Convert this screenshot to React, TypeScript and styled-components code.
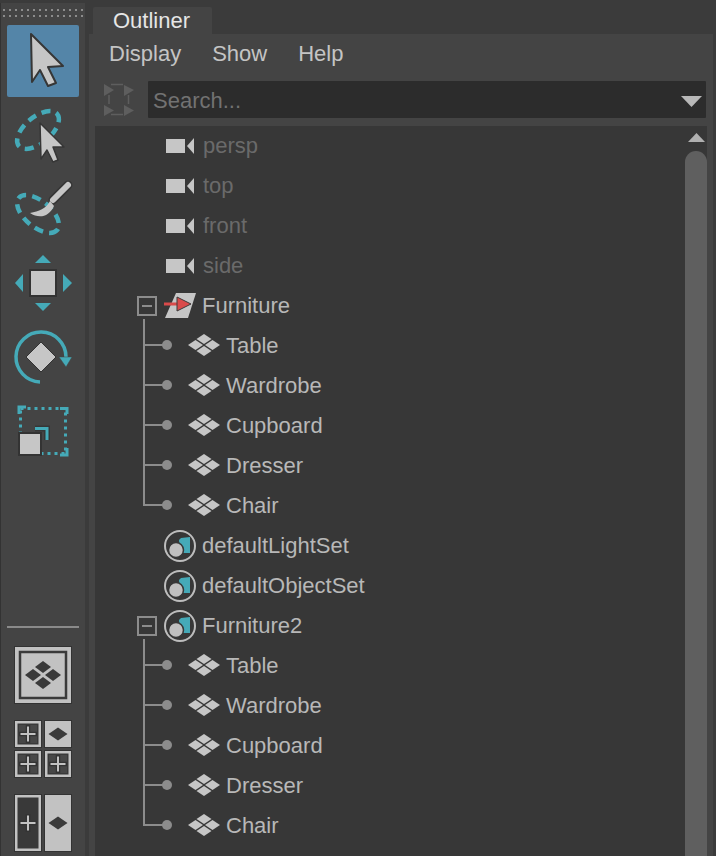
import React from 'react';
import styled, { createGlobalStyle } from 'styled-components';

const TEAL = '#45aab8';
const LIGHT = '#c6c6c6';
const DARK = '#373737';

const GlobalStyle = createGlobalStyle`
  html, body {
    margin: 0;
    padding: 0;
    background: #3b3b3b;
  }
`;

const Page = styled.div`
  display: flex;
  width: 716px;
  height: 856px;
  overflow: hidden;
  background: #3b3b3b;
  font-family: "Liberation Sans", Arial, sans-serif;
  font-size: 22px;
`;

const Toolbar = styled.aside`
  display: flex;
  flex-direction: column;
  flex: none;
  box-sizing: border-box;
  width: 85px;
  height: 853px;
  margin-top: 3px;
  padding-left: 6px;
  background: #444444;
  border-left: 1px solid #333333;
`;

const Grip = styled.div`
  flex: none;
  width: 81px;
  height: 12px;
  margin: 6px 0 4px -5px;
  background-image: radial-gradient(circle at 2px 1px, #8c8c8c 1px, transparent 1.3px);
  background-size: 6px 6px;
`;

const ToolStack = styled.div`
  display: flex;
  flex-direction: column;
  flex: none;
  gap: 2px;
`;

const ToolButton = styled.button<{ $active?: boolean }>`
  display: block;
  flex: none;
  width: 72px;
  height: 72px;
  padding: 0;
  border: none;
  border-radius: 2px;
  background: ${props => (props.$active ? '#5485a8' : 'transparent')};
`;

const Divider = styled.div`
  flex: none;
  width: 72px;
  height: 2px;
  margin: 159px 0 11px;
  background: #8a8a8a;
`;

const Main = styled.main`
  display: flex;
  flex-direction: column;
  flex: 1;
  min-width: 0;
`;

const TabBar = styled.div`
  display: flex;
  flex: none;
  height: 27px;
  padding: 7px 0 0 8px;
`;

const Tab = styled.div`
  box-sizing: border-box;
  width: 119px;
  height: 27px;
  padding-left: 20px;
  border-radius: 2px 2px 0 0;
  background: #444444;
  color: #e6e6e6;
  line-height: 28px;
`;

const Panel = styled.section`
  display: flex;
  flex-direction: column;
  flex: 1;
  min-height: 0;
  width: 624px;
  margin-left: 4px;
  background: #444444;
`;

const MenuBar = styled.nav`
  display: flex;
  flex: none;
  gap: 31px;
  height: 47px;
  padding-left: 20px;
  color: #c4c4c4;
  line-height: 40px;
`;

const SearchRow = styled.div`
  display: flex;
  flex: none;
  gap: 14px;
  align-items: center;
  height: 37px;
  margin-bottom: 8px;
  padding: 0 7px 0 15px;
`;

const SearchBox = styled.div`
  display: flex;
  flex: 1;
  box-sizing: border-box;
  align-items: center;
  justify-content: space-between;
  height: 37px;
  padding: 2px 4px 0 5px;
  border-radius: 1px;
  background: #2c2c2c;
  color: #727272;
`;

const DropArrow = styled.svg`
  flex: none;
  margin-top: 2px;
`;

const TreeArea = styled.div`
  display: flex;
  flex: 1;
  min-height: 0;
  margin: 0 6px;
  background: ${DARK};
`;

const TreeList = styled.ul`
  flex: 1;
  margin: 0;
  padding: 0 0 0 42px;
  list-style: none;
`;

const Row = styled.li<{ $dim?: boolean }>`
  display: flex;
  align-items: center;
  height: 40px;
  color: ${props => (props.$dim ? '#6a6a6a' : '#b8b8b8')};
`;

const Gutter = styled.span`
  flex: none;
  width: 27px;
  height: 40px;
`;

const Label = styled.span<{ $gap: number }>`
  margin-left: ${props => props.$gap}px;
`;

const ScrollTrack = styled.div`
  display: flex;
  flex-direction: column;
  align-items: center;
  flex: none;
  width: 22px;
  padding-top: 7px;
`;

const ScrollThumb = styled.div`
  flex: 1;
  width: 22px;
  margin-top: 9px;
  border-radius: 11px 11px 0 0;
  background: #5f5f5f;
`;

const SelectArrow = ({ points, edge = 2 }: { points: string; edge?: number }) => (
  <polygon points={points} fill={LIGHT} stroke="#363636" strokeWidth={edge} strokeLinejoin="round" />
);

const ToolIcon = ({ children }: { children: React.ReactNode }) => (
  <svg width={72} height={72} viewBox="0 0 72 72">
    {children}
  </svg>
);

const Diamond = ({ x, y, w, h, fill }: { x: number; y: number; w: number; h: number; fill: string }) => (
  <polygon points={`${x},${y - h} ${x + w},${y} ${x},${y + h} ${x - w},${y}`} fill={fill} />
);

const PlusCell = ({ x, y, w = 26, h = 26 }: { x: number; y: number; w?: number; h?: number }) => {
  const cx = x + w / 2;
  const cy = y + h / 2;
  return (
    <g>
      <rect x={x - 1} y={y - 1} width={w + 2} height={h + 2} fill="#333333" />
      <rect x={x + 1.25} y={y + 1.25} width={w - 2.5} height={h - 2.5} fill="#393939" stroke="#c2c2c2" strokeWidth={2.5} />
      {h === 26 &&
        [
          [x + 4, y + 4],
          [x + 15, y + 4],
          [x + 4, y + 15],
          [x + 15, y + 15],
        ].map(([px, py]) => <rect key={`${px}-${py}`} x={px} y={py} width={7} height={7} fill="#474747" />)}
      <path d={`M${cx - 9} ${cy}h18M${cx} ${cy - 9}v18`} stroke="#333333" strokeWidth={4.5} />
      <path d={`M${cx - 7.5} ${cy}h15M${cx} ${cy - 7.5}v15`} stroke="#c2c2c2" strokeWidth={2} />
    </g>
  );
};

const FilledCell = ({ x, y, w = 26, h = 26 }: { x: number; y: number; w?: number; h?: number }) => (
  <g>
    <rect x={x - 1} y={y - 1} width={w + 2} height={h + 2} fill="#333333" />
    <rect x={x} y={y} width={w} height={h} fill="#c2c2c2" />
    <Diamond x={x + w / 2} y={y + h / 2} w={9.5} h={6.5} fill="#3a3a3a" />
  </g>
);

const CameraIcon = () => (
  <svg width={33} height={20} viewBox="0 0 33 20">
    <rect x={2} y={3} width={19} height={14} fill={LIGHT} />
    <polygon points="23,10 30,2 30,18" fill={LIGHT} />
  </svg>
);

const GroupIcon = () => (
  <svg width={34} height={24} viewBox="0 0 34 24">
    <Diamond x={17} y={5} w={7.5} h={5} fill={LIGHT} />
    <Diamond x={8.5} y={11} w={7.5} h={5} fill={LIGHT} />
    <Diamond x={25.5} y={11} w={7.5} h={5} fill={LIGHT} />
    <Diamond x={17} y={17} w={7.5} h={5} fill={LIGHT} />
  </svg>
);

const SetIcon = () => (
  <svg width={33} height={40} viewBox="0 0 33 40">
    <circle cx={16} cy={20} r={15} fill="none" stroke="#bdbdbd" strokeWidth={2} />
    <polygon points="17,12 26,11 26,27 16,27 15,14" fill={TEAL} />
    <circle cx={12} cy={24} r={7.5} fill="#c0c0c0" stroke={DARK} strokeWidth={1.5} />
  </svg>
);

const RedirectIcon = () => (
  <svg width={33} height={40} viewBox="0 0 33 40">
    <polygon points="1,32 12,7 32,7 24,32" fill={LIGHT} />
    <path d="M0 18h15" stroke="#d94a4a" strokeWidth={3} />
    <polygon points="13,11 27,18 13,25" fill="#d94a4a" stroke="#3a3a3a" strokeWidth={1} strokeLinejoin="round" />
  </svg>
);

const Expander = () => (
  <Gutter>
    <svg width={27} height={40} viewBox="0 0 27 40" style={{ display: 'block' }}>
      <rect x={1} y={11} width={18} height={18} fill="none" stroke="#8c8c8c" strokeWidth={2} />
      <path d="M5 20h10" stroke="#8c8c8c" strokeWidth={2} />
      <path d="M7 33v7" stroke="#8c8c8c" strokeWidth={2} />
    </svg>
  </Gutter>
);

const Connector = ({ last }: { last?: boolean }) => (
  <svg width={50} height={40} viewBox="0 0 50 40" style={{ flex: 'none' }}>
    <path d={`M7 0V${last ? 20 : 40}M6 19H28`} fill="none" stroke="#8c8c8c" strokeWidth={2} />
    <circle cx={30} cy={19} r={5} fill="#8c8c8c" />
  </svg>
);

const CHILDREN = ['Table', 'Wardrobe', 'Cupboard', 'Dresser', 'Chair'];
const CAMERAS = ['persp', 'top', 'front', 'side'];

const ChildRows = ({ prefix }: { prefix: string }) => (
  <>
    {CHILDREN.map((name, i) => (
      <Row key={prefix + name}>
        <Connector last={i === CHILDREN.length - 1} />
        <GroupIcon />
        <Label $gap={5}>{name}</Label>
      </Row>
    ))}
  </>
);

export default function App() {
  return (
    <Page>
      <GlobalStyle />
      <Toolbar>
        <Grip />
        <ToolStack>
          <ToolButton $active>
            <ToolIcon>
              <SelectArrow points="24,9 56,41 41,42 49,58 41,61 33,45 25,57" />
            </ToolIcon>
          </ToolButton>
          <ToolButton>
            <ToolIcon>
              <ellipse
                cx={31}
                cy={31}
                rx={25}
                ry={13}
                transform="rotate(-40 31 31)"
                fill="none"
                stroke={TEAL}
                strokeWidth={4.5}
                strokeDasharray="9 6"
              />
              <SelectArrow points="33,24 57,48 46,48 51,61 46,63 40,51 34,60" edge={1.5} />
            </ToolIcon>
          </ToolButton>
          <ToolButton>
            <ToolIcon>
              <ellipse
                cx={31}
                cy={41}
                rx={25}
                ry={13}
                transform="rotate(40 31 41)"
                fill="none"
                stroke={TEAL}
                strokeWidth={4.5}
                strokeDasharray="9 6"
              />
              <path d="M61 12L46 27" stroke="#363636" strokeWidth={9} strokeLinecap="round" />
              <path d="M61 12L46 27" stroke={LIGHT} strokeWidth={6} strokeLinecap="round" />
              <path d="M43 28C39 36 32 38 23 40C32 46 42 44 47 33Z" fill={LIGHT} />
            </ToolIcon>
          </ToolButton>
          <ToolButton>
            <ToolIcon>
              <rect x={23} y={23} width={26} height={26} fill={LIGHT} stroke="#333333" strokeWidth={2} />
              <polygon points="36,8 44,16 28,16" fill={TEAL} />
              <polygon points="36,64 44,56 28,56" fill={TEAL} />
              <polygon points="8,36 16,27 16,45" fill={TEAL} />
              <polygon points="65,36 56,27 56,45" fill={TEAL} />
            </ToolIcon>
          </ToolButton>
          <ToolButton>
            <ToolIcon>
              <path d="M59 36A25 25 0 1 0 33 61" fill="none" stroke={TEAL} strokeWidth={3.5} />
              <polygon points="52,36 65,36 59,46" fill={TEAL} stroke="#444444" strokeWidth={0.5} />
              <polygon points="34,21 49,36 34,51 19,36" fill={LIGHT} stroke="#333333" strokeWidth={1} />
            </ToolIcon>
          </ToolButton>
          <ToolButton>
            <ToolIcon>
              <rect x={13.5} y={13.5} width={45} height={45} fill="none" stroke={TEAL} strokeWidth={3} strokeDasharray="3 4" />
              <path d="M12 19V12H19M53 13.5H60V19M60 53V60H53" fill="none" stroke={TEAL} strokeWidth={3} />
              <path d="M28 33.5H40V45" fill="none" stroke="#363636" strokeWidth={6} />
              <path d="M28 33.5H40V45" fill="none" stroke={TEAL} strokeWidth={3} />
              <rect x={12} y={38} width={22} height={22} fill={LIGHT} stroke="#333333" strokeWidth={2} />
            </ToolIcon>
          </ToolButton>
        </ToolStack>
        <Divider />
        <ToolStack>
          <ToolButton>
            <ToolIcon>
              <rect x={7} y={7} width={58} height={58} fill="#333333" />
              <rect x={8} y={8} width={56} height={56} fill="#c2c2c2" />
              <rect x={13} y={13} width={46} height={46} fill="none" stroke="#3a3a3a" strokeWidth={2.5} />
              <Diamond x={36} y={28} w={8} h={6} fill="#3a3a3a" />
              <Diamond x={26} y={36} w={8} h={6} fill="#3a3a3a" />
              <Diamond x={46} y={36} w={8} h={6} fill="#3a3a3a" />
              <Diamond x={36} y={44} w={8} h={6} fill="#3a3a3a" />
            </ToolIcon>
          </ToolButton>
          <ToolButton>
            <ToolIcon>
              <PlusCell x={8} y={8} />
              <FilledCell x={38} y={8} />
              <PlusCell x={8} y={38} />
              <PlusCell x={38} y={38} />
            </ToolIcon>
          </ToolButton>
          <ToolButton>
            <ToolIcon>
              <PlusCell x={8} y={8} h={56} />
              <FilledCell x={38} y={8} h={56} />
            </ToolIcon>
          </ToolButton>
        </ToolStack>
      </Toolbar>
      <Main>
        <TabBar>
          <Tab>Outliner</Tab>
        </TabBar>
        <Panel>
          <MenuBar>
            <span>Display</span>
            <span>Show</span>
            <span>Help</span>
          </MenuBar>
          <SearchRow>
            <svg width={30} height={33} viewBox="0 0 30 33">
              <g fill="#5e5e5e">
                <polygon points="0,1 10,7 0,13" />
                <polygon points="20,2 30,7 20,13" />
                <polygon points="0,22 10,27.5 0,33" />
                <polygon points="20,22 30,27.5 20,33" />
              </g>
              <path d="M7 1.5H19M7 31.5H19M5 12V21M24.5 12V21" stroke="#5e5e5e" strokeWidth={1.5} fill="none" />
            </svg>
            <SearchBox>
              <span>Search...</span>
              <DropArrow width={21} height={11} viewBox="0 0 21 11">
                <polygon points="0,0 21,0 10.5,11" fill="#b8b8b8" />
              </DropArrow>
            </SearchBox>
          </SearchRow>
          <TreeArea>
            <TreeList>
              {CAMERAS.map(name => (
                <Row key={name} $dim>
                  <Gutter />
                  <CameraIcon />
                  <Label $gap={6}>{name}</Label>
                </Row>
              ))}
              <Row>
                <Expander />
                <RedirectIcon />
                <Label $gap={5}>Furniture</Label>
              </Row>
              <ChildRows prefix="a" />
              <Row>
                <Gutter />
                <SetIcon />
                <Label $gap={5}>defaultLightSet</Label>
              </Row>
              <Row>
                <Gutter />
                <SetIcon />
                <Label $gap={5}>defaultObjectSet</Label>
              </Row>
              <Row>
                <Expander />
                <SetIcon />
                <Label $gap={5}>Furniture2</Label>
              </Row>
              <ChildRows prefix="b" />
            </TreeList>
            <ScrollTrack>
              <svg width={17} height={9} viewBox="0 0 17 9" style={{ flex: 'none' }}>
                <polygon points="8.5,0 17,9 0,9" fill="#b0b0b0" />
              </svg>
              <ScrollThumb />
            </ScrollTrack>
          </TreeArea>
        </Panel>
      </Main>
    </Page>
  );
}
